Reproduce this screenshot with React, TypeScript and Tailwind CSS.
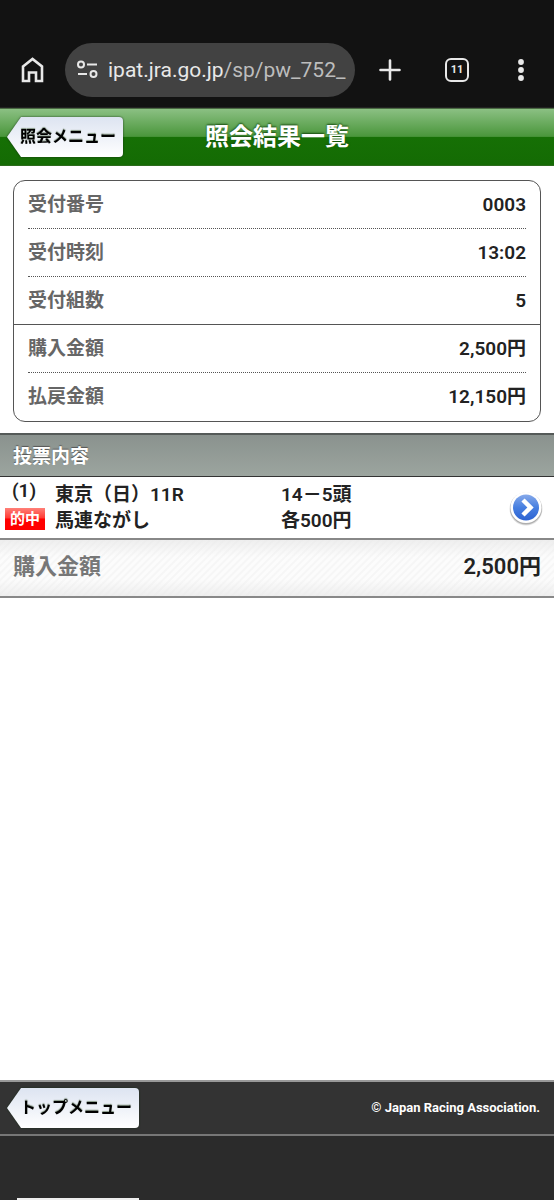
type Row = { label: string; value: string; border: string }

const summary: Row[] = [
  { label: '受付番号', value: '0003', border: 'border-b border-dotted border-[#555]' },
  { label: '受付時刻', value: '13:02', border: 'border-b border-dotted border-[#555]' },
  { label: '受付組数', value: '5', border: '' },
]

const amounts: Row[] = [
  { label: '購入金額', value: '2,500円', border: 'border-b border-dotted border-[#555]' },
  { label: '払戻金額', value: '12,150円', border: '' },
]

function SummaryRows({ rows }: { rows: Row[] }) {
  return (
    <dl className="px-[14px]">
      {rows.map((row) => (
        <div key={row.label} className={`flex h-12 items-center justify-between ${row.border}`}>
          <dt className="font-bold text-[#666]">{row.label}</dt>
          <dd>{row.value}</dd>
        </div>
      ))}
    </dl>
  )
}

function MenuLink({ label }: { label: string }) {
  return (
    <a href="#" className="block drop-shadow-[0_0_1px_rgba(20,40,20,0.8)]">
      <span className="flex h-10 items-center rounded-r bg-linear-to-b from-[#dde4f1] to-white pr-[7px] pl-[13px] text-base font-bold text-black [clip-path:polygon(0_50%,14px_0,100%_0,100%_100%,14px_100%)] [text-shadow:0_-1px_1px_#889988]">
        {label}
      </span>
    </a>
  )
}

function BrowserBar() {
  return (
    <div className="flex h-[108px] items-center border-b border-[#222] bg-[#121212] px-[21px] pt-8 text-[#e8e8e8]">
      <button type="button" aria-label="Home" className="mr-[21px]">
        <svg width="23" height="26" viewBox="0 0 23 26" fill="none" stroke="currentColor" strokeWidth="2.6">
          <path d="M2 9.500 11.500 2 21 9.500V24h-6v-8.500H8V24H2z" />
        </svg>
      </button>
      <button
        type="button"
        aria-label="Address bar"
        className="flex h-[54px] min-w-0 flex-1 items-center gap-[10px] rounded-full bg-[#424242] pl-3"
      >
        <svg className="shrink-0" width="21" height="19" viewBox="0 0 21 19" fill="none" stroke="currentColor" strokeWidth="2">
          <circle cx="4" cy="4.500" r="3" />
          <path d="M10 4.500h10M1 14h9" />
          <circle cx="16.500" cy="14" r="3" />
        </svg>
        <span className="text-[21px] leading-8 whitespace-nowrap">
          ipat.jra.go.jp<span className="text-[#bdbdbd]">/sp/pw_752_</span>
        </span>
      </button>
      <button type="button" aria-label="New tab" className="ml-6">
        <svg width="22" height="22" viewBox="0 0 22 22" stroke="currentColor" strokeWidth="2.600" strokeLinecap="round">
          <path d="M11 1.500v19M1.500 11h19" />
        </svg>
      </button>
      <button
        type="button"
        aria-label="Tabs"
        className="ml-11 flex h-6 w-6 items-center justify-center rounded-md border-2 border-[#e8e8e8] text-[11px] font-bold"
      >
        11
      </button>
      <button type="button" aria-label="Menu" className="ml-10 flex w-6 justify-center">
        <svg width="6" height="22" viewBox="0 0 6 22" fill="currentColor">
          <circle cx="3" cy="3" r="2.900" />
          <circle cx="3" cy="11" r="2.900" />
          <circle cx="3" cy="19" r="2.900" />
        </svg>
      </button>
    </div>
  )
}

function ArrowIcon() {
  return (
    <svg width="36" height="36" viewBox="0 0 36 36" aria-hidden="true">
      <defs>
        <linearGradient id="blue" x1="0" y1="0" x2="0" y2="1">
          <stop offset="0" stopColor="#86a9ea" />
          <stop offset="0.5" stopColor="#477fe0" />
          <stop offset="1" stopColor="#2b62d2" />
        </linearGradient>
      </defs>
      <circle cx="18" cy="19" r="16.500" fill="#000" opacity="0.12" />
      <circle cx="18" cy="18.500" r="16" fill="#000" opacity="0.22" />
      <circle cx="18" cy="17.500" r="15.500" fill="#fff" />
      <circle cx="18" cy="17.500" r="13" fill="url(#blue)" />
      <path d="m15 10 7.500 7.500L15 25" fill="none" stroke="#fff" strokeWidth="4.500" />
    </svg>
  )
}

export default function App() {
  return (
    <div className="flex min-h-screen flex-col bg-white font-['Roboto','Noto_Sans_CJK_JP',sans-serif] text-[19px] leading-[26px] text-[#222]">
      <BrowserBar />

      <header className="grid h-[58px] grid-cols-[1fr_auto_1fr] items-center border-t border-b border-t-[#4b6b43] border-b-[#2c6b1c] bg-[linear-gradient(#8bc083,#4a963b_49%,#167005_50%,#146b04)] px-[7px]">
        <div className="flex">
          <MenuLink label="照会メニュー" />
        </div>
        <h1 className="text-2xl font-bold text-white [text-shadow:0_-1px_2px_#174d10]">照会結果一覧</h1>
      </header>

      <main className="flex-1 font-semibold">
        <section className="mx-[13px] mt-[14px] mb-[11px] rounded-xl border border-[#555]">
          <SummaryRows rows={summary} />
          <div className="-mt-px border-t border-[#555]">
            <SummaryRows rows={amounts} />
          </div>
        </section>

        <h2 className="flex h-11 items-center border-t-2 border-b border-t-[#555a58] border-b-[#333] bg-linear-to-b from-[#8a928e] to-[#9ca59f] px-[13px] pt-0.5 font-bold text-white [text-shadow:0_-1px_1px_#555]">
          投票内容
        </h2>

        <a href="#" className="flex h-[63px] items-center border-b-2 border-[#888] pt-px pr-[10px] pl-[5px]">
          <div className="flex w-[50px] flex-col items-start gap-1 self-start">
            <span className="pl-[7px]">(1)</span>
            <span className="bg-[linear-gradient(#ff8078,#ff3b35_45%,#f00_50%,#f00)] px-[5px] text-[15px] leading-[22px] text-white">
              的中
            </span>
          </div>
          <div className="w-[226px]">
            <p>東京（日）11R</p>
            <p>馬連ながし</p>
          </div>
          <div className="flex-1">
            <p>14－5頭</p>
            <p>各500円</p>
          </div>
          <ArrowIcon />
        </a>

        <dl className="flex h-[58px] items-center justify-between border-b-2 border-[#888] bg-[linear-gradient(#e8e8e8b0,#fff0_30%,#fff0_70%,#e8e8e8b0),repeating-linear-gradient(135deg,#fcfcfc_0_2px,#f6f6f6_3px_4px,#fcfcfc_5px)] px-[13px] pb-0.5 text-[22px]">
          <dt className="font-bold text-[#777]">購入金額</dt>
          <dd>2,500円</dd>
        </dl>
      </main>

      <footer className="bg-[#2b2b2b]">
        <div className="flex h-14 items-center justify-between border-t-2 border-b-2 border-t-[#999] border-b-[#777] bg-[#333] pr-[14px] pl-[7px]">
          <MenuLink label="トップメニュー" />
          <small className="text-[13px] font-bold text-white">© Japan Racing Association.</small>
        </div>
        <div className="flex h-16 items-end pl-[17px]">
          <div className="h-0.5 w-[122px] bg-[#eee]" />
        </div>
      </footer>
    </div>
  )
}
